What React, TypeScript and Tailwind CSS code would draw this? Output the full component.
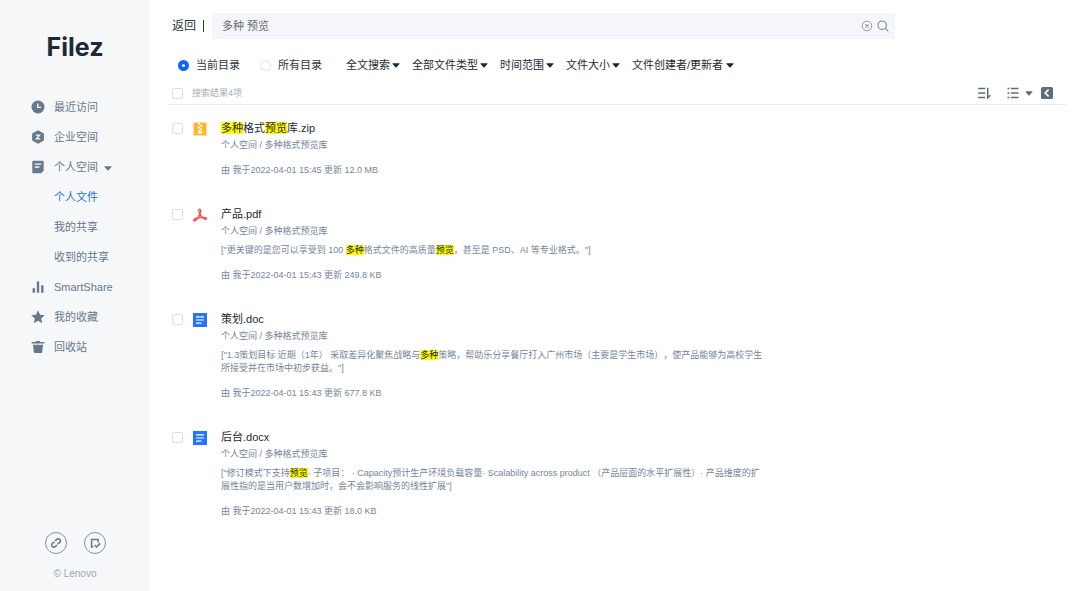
import React, { useState } from 'react';
import clsx from 'clsx';

interface FileResult {
  name: string;
  kind: 'zip' | 'pdf' | 'doc';
  excerpt?: string;
  updated: string;
}

const KEYWORDS = /(多种|预览)/;

const FILES: FileResult[] = [
  { name: '多种格式预览库.zip', kind: 'zip', updated: '由 我于2022-04-01 15:45 更新 12.0 MB' },
  {
    name: '产品.pdf',
    kind: 'pdf',
    excerpt: '["更关键的是您可以享受到 100 多种格式文件的高质量预览，甚至是 PSD、AI 等专业格式。"]',
    updated: '由 我于2022-04-01 15:43 更新 249.8 KB',
  },
  {
    name: '策划.doc',
    kind: 'doc',
    excerpt:
      '["1.3策划目标 近期（1年） 采取差异化聚焦战略与多种策略，帮助乐分享餐厅打入广州市场（主要是学生市场），使产品能够为高校学生所接受并在市场中初步获益。"]',
    updated: '由 我于2022-04-01 15:43 更新 677.8 KB',
  },
  {
    name: '后台.docx',
    kind: 'doc',
    excerpt:
      '["修订模式下支持预览· 子项目： · Capacity预计生产环境负载容量· Scalability across product （产品层面的水平扩展性）· 产品维度的扩展性指的是当用户数增加时，会不会影响服务的线性扩展"]',
    updated: '由 我于2022-04-01 15:43 更新 18.0 KB',
  },
];

const FILTERS = ['全文搜索', '全部文件类型', '时间范围', '文件大小', '文件创建者/更新者'];

function Caret({ className }: { className?: string }) {
  return (
    <svg viewBox="0 0 8 5" className={clsx('w-2 h-[5px] shrink-0 pointer-events-none', className)} fill="currentColor">
      <path d="M1 .3h6c.5 0 .7.5.4.8L4.6 4.2a.8.8 0 0 1-1.2 0L.6 1.1C.3.8.5.3 1 .3z" />
    </svg>
  );
}

const NAV_ICONS = {
  recent: (
    <>
      <circle cx="7" cy="7" r="6.5" fill="currentColor" />
      <path d="M6.800 3.400v4h3.400" fill="none" stroke="#f5f7f9" strokeWidth="1.400" />
    </>
  ),
  company: (
    <>
      <path d="M7 .3l5.400 2.900a1 1 0 0 1 .5.9v5.800a1 1 0 0 1-.5.9L7 13.700l-5.400-2.900a1 1 0 0 1-.5-.9V4.100a1 1 0 0 1 .5-.9z" fill="currentColor" />
      <path d="M4.800 5.100h3.700L5.500 8.900h3.800" fill="none" stroke="#f5f7f9" strokeWidth="1.400" />
    </>
  ),
  personal: (
    <>
      <path d="M2.200.8h9.600c.5 0 .9.4.9.9v8.800l-2.400 2.700H2.200a.9.9 0 0 1-.9-.9V1.700c0-.5.4-.9.9-.9z" fill="currentColor" />
      <path d="M3.800 4.100h6.600M3.800 7h4.600" stroke="#f5f7f9" strokeWidth="1.400" />
    </>
  ),
  share: <path d="M1.600 8.200h2.400v4.600H1.600zM5.800 1.500h2.400v11.300H5.800zM10.100 5.200h2.400v7.600h-2.400z" fill="currentColor" />,
  star: <path d="M7 .3l2 4.400 4.800.5-3.600 3.200 1 4.800L7 10.800l-4.200 2.400 1-4.800L.2 5.200 5 4.700z" fill="currentColor" />,
  trash: (
    <path d="M5.200.9h3.600l.5 1h3.400c.4 0 .7.3.7.7v.9H.6v-.9c0-.4.3-.7.7-.7h3.400zM2 4.800h10l-.8 7.300c-.1.6-.5 1-1.100 1H3.900c-.6 0-1-.4-1.100-1z" fill="currentColor" />
  ),
};

interface NavItem {
  label: string;
  icon?: keyof typeof NAV_ICONS;
  active?: boolean;
  open?: boolean;
}

const NAV: NavItem[] = [
  { label: '最近访问', icon: 'recent' },
  { label: '企业空间', icon: 'company' },
  { label: '个人空间', icon: 'personal', open: true },
  { label: '个人文件', active: true },
  { label: '我的共享' },
  { label: '收到的共享' },
  { label: 'SmartShare', icon: 'share' },
  { label: '我的收藏', icon: 'star' },
  { label: '回收站', icon: 'trash' },
];

function Sidebar() {
  return (
    <aside className="w-[150px] shrink-0 flex flex-col bg-[#f5f7f9] text-[#66788a]">
      <h1 className="pt-8 text-center text-[25px] leading-[30px] font-bold text-[#1d2935] font-['Inter','Lato',sans-serif]">Filez</h1>

      <nav className="mt-[30px]">
        <ul>
          {NAV.map((item) => (
            <li key={item.label}>
              <a href="#" className={clsx('flex items-center h-[30px] pl-[31px]', item.active && 'text-[#2a6cf5]')}>
                <span className="w-[23px] shrink-0">
                  {item.icon && (
                    <svg viewBox="0 0 14 14" className="size-3.5">
                      {NAV_ICONS[item.icon]}
                    </svg>
                  )}
                </span>
                {item.label}
                {item.open && <Caret className="ml-1.5 mt-0.5" />}
              </a>
            </li>
          ))}
        </ul>
      </nav>

      {/* Bottom shortcuts */}
      <div className="mt-auto flex justify-center gap-[17px]">
        <button aria-label="link" className="size-[22px] rounded-full border border-[#8494a4] flex items-center justify-center">
          <svg viewBox="0 0 12 12" className="size-3" fill="none" stroke="currentColor" strokeWidth="1.500">
            <path d="M5.400 4.300V3.700L6.500 2.400a2.100 2.100 0 0 1 3.200 0 2.100 2.100 0 0 1 0 3.100L8.500 6.600H7.300" />
            <path d="M6.600 7.700v.6L5.500 9.600a2.100 2.100 0 0 1-3.200 0 2.100 2.100 0 0 1 0-3.100l1.200-1.100h1.200" />
          </svg>
        </button>
        <button aria-label="tasks" className="size-[22px] rounded-full border border-[#8494a4] flex items-center justify-center">
          <svg viewBox="0 0 12 12" className="size-3" fill="none" stroke="currentColor" strokeWidth="1.500">
            <path d="M9.200 5.500V2.400H2.600v8.400" />
            <path d="M2.600 9.800h1.800M5.600 8l2 2 3.600-3.600" />
          </svg>
        </button>
      </div>
      <p className="mt-3 mb-[9px] text-center text-[10px] leading-4 text-[#9aa6b2]">© Lenovo</p>
    </aside>
  );
}

function FileIcon({ kind }: { kind: FileResult['kind'] }) {
  if (kind === 'zip') {
    return (
      <svg viewBox="0 0 14 14" className="size-3.5">
        <path d="M.5.5h13v13H.5z" fill="#ffb82e" />
        <path d="M5 1h2v1.800H5zM7 2.800h2v1.800H7zM5 4.600h2v1.800H5zM7 6.400h2v1.800H7zM5 8.200h2v1h2v2.300H5z" fill="#fff" />
      </svg>
    );
  }
  if (kind === 'pdf') {
    return (
      <svg viewBox="0 0 14 14" className="size-3.5" fill="none" stroke="#fb4747" strokeWidth="1.300" strokeLinejoin="round">
        <path d="M6.500 5C5.300 3 5.700 1.200 6.700 1.200S8 3 7.300 5C6.500 7.600 4.800 10 3.100 12c-.9 1.200-2.200 1.200-2.300.6-.2-.9 1.600-2 4.200-2.600 2.600-.7 5-.9 6.800-.5 1.500.3 2 1 1.500 1.400-.7.6-2.700 0-4.200-1.500C7.900 8.100 7.100 6.500 6.500 5z" />
      </svg>
    );
  }
  return (
    <svg viewBox="0 0 14 14" className="size-3.5">
      <path d="M0 0h14v14H0z" fill="#2475fc" />
      <path d="M3 3.900h8M3 7h8M3 10.100h5.500" stroke="#fff" strokeWidth="1.100" />
    </svg>
  );
}

function Highlight({ text }: { text: string }) {
  return (
    <>
      {text.split(KEYWORDS).map((part, i) =>
        KEYWORDS.test(part) ? (
          <mark key={i} className="bg-[#fffb00] text-[#1d2935]">
            {part}
          </mark>
        ) : (
          part
        ),
      )}
    </>
  );
}

function Checkbox({ label }: { label: string }) {
  return (
    <input
      type="checkbox"
      aria-label={label}
      className="appearance-none size-[11px] shrink-0 rounded-[2px] border border-[#dcdfe3] bg-white checked:bg-[#0a66ff]"
    />
  );
}

function FileRow({ file }: { file: FileResult }) {
  return (
    <li className="flex items-start pl-1">
      <div className="flex items-center h-[17px] w-[49px] shrink-0 gap-2.5">
        <Checkbox label={file.name} />
        <FileIcon kind={file.kind} />
      </div>
      <div className="max-w-[545px] text-[9px] leading-[13px] text-[#75859a] [text-spacing-trim:space-all]">
        <a href="#" className="block text-[11px] leading-[17px] text-[#1d2935]">
          <Highlight text={file.name} />
        </a>
        <p className="leading-[17px]">个人空间 / 多种格式预览库</p>
        {file.excerpt && (
          <p className="mt-1 pb-0.5">
            <Highlight text={file.excerpt} />
          </p>
        )}
        <p className="mt-2 leading-4">{file.updated}</p>
      </div>
    </li>
  );
}

export default function App() {
  const [query, setQuery] = useState('多种 预览');
  const [scope, setScope] = useState('当前目录');

  return (
    <div
      lang="zh-CN"
      className="min-h-screen flex bg-white text-[11px] leading-4 text-[#2b3845] font-['Liberation_Sans','Noto_Sans_CJK_SC',sans-serif]"
    >
      <Sidebar />

      <main className="flex-1 min-w-0 pt-[13px] pl-[18px] pr-3.5">
        {/* Search bar */}
        <div className="flex items-center pl-1 mr-[171px]">
          <a href="#" className="text-xs">返回</a>
          <span className="w-px h-3 ml-[7px] mr-2 bg-[#2b3845]" />
          <div className="flex-1 flex items-center h-[26px] pl-2.5 pr-1.5 gap-1 bg-[#f5f6fb]">
            <input
              type="text"
              aria-label="搜索"
              value={query}
              onChange={(e) => setQuery(e.target.value)}
              className="flex-1 min-w-0 bg-transparent outline-none text-[#666b73]"
            />
            <button aria-label="clear" onClick={() => setQuery('')}>
              <svg viewBox="0 0 12 12" className="size-3" fill="none" stroke="#888d96">
                <circle cx="6" cy="6" r="4.800" strokeWidth=".9" />
                <path d="M4.500 4.500l3 3M7.500 4.500l-3 3" strokeWidth="1.100" />
              </svg>
            </button>
            <button aria-label="search">
              <svg viewBox="0 0 12 12" className="size-3" fill="none" stroke="#7d838d" strokeWidth="1.100">
                <circle cx="5.200" cy="5.200" r="4.200" />
                <path d="M8.300 8.300l3 3" />
              </svg>
            </button>
          </div>
        </div>

        {/* Filters */}
        <div className="flex items-center h-[26px] mt-[13px] pl-2.5">
          {['当前目录', '所有目录'].map((option) => (
            <label key={option} className="flex items-center gap-[7px] mr-5">
              <input
                type="radio"
                name="scope"
                checked={scope === option}
                onChange={() => setScope(option)}
                className="appearance-none size-[11px] rounded-full border border-[#dcdfe3] bg-white checked:border-4 checked:border-[#0a66ff]"
              />
              {option}
            </label>
          ))}
          <div className="flex items-center gap-3 ml-1">
            {FILTERS.map((filter) => (
              <label key={filter} className="flex items-center gap-0.5 text-[#1d2935]">
                <select aria-label={filter} className="appearance-none bg-transparent outline-none">
                  <option>{filter}</option>
                </select>
                <Caret />
              </label>
            ))}
          </div>
        </div>

        {/* Result toolbar */}
        <div className="flex items-center h-[27px] pl-1 pt-1 border-b border-[#e9ebee] text-[#5d6d7e]">
          <label className="flex items-center gap-[9px] mr-auto text-[9px] text-[#a3adb8]">
            <Checkbox label="搜索结果4项" />
            搜索结果4项
          </label>
          <button aria-label="sort" className="mr-4">
            <svg viewBox="0 0 14 12" className="w-3.5 h-3" fill="none" stroke="currentColor" strokeWidth="1.500">
              <path d="M1.200 1.500h7M1.200 6h7M1.200 10.500h7M10.700.8v10l2.600-2.600" />
            </svg>
          </button>
          <button aria-label="view" className="flex items-center gap-1.5 mr-2">
            <svg viewBox="0 0 12 12" className="size-3" fill="none" stroke="currentColor" strokeWidth="1.500">
              <path d="M.5 1.500h2M4 1.500h7.500M.5 6h2M4 6h7.500M.5 10.500h2M4 10.500h7.500" />
            </svg>
            <Caret />
          </button>
          <button aria-label="collapse" className="mr-[13px]">
            <svg viewBox="0 0 12 12" className="size-3">
              <rect width="12" height="12" rx="1.500" fill="currentColor" />
              <path d="M7.600 2.600L4.200 6l3.400 3.400" fill="none" stroke="#fff" strokeWidth="1.600" />
            </svg>
          </button>
        </div>

        {/* Results */}
        <ul className="flex flex-col gap-7 pt-[15px] pb-7">
          {FILES.map((file) => (
            <FileRow key={file.name} file={file} />
          ))}
        </ul>
      </main>
    </div>
  );
}
